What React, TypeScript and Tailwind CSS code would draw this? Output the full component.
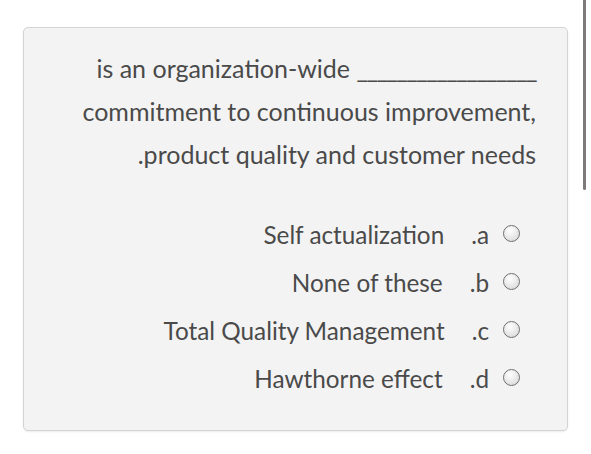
import React from "react";

const options = [
  { text: "Self actualization", letter: ".a" },
  { text: "None of these", letter: ".b" },
  { text: "Total Quality Management", letter: ".c" },
  { text: "Hawthorne effect", letter: ".d" },
];

function Radio() {
  return (
    <span className="inline-block w-[17px] h-[17px] rounded-full border border-[#6f6f6f] bg-[radial-gradient(circle_at_40%_30%,#ffffff,#d4d4d4)]" />
  );
}

export default function App() {
  return (
    <div
      className="relative w-[591px] h-[454px] bg-white overflow-hidden"
      style={{ fontFamily: "Lato, 'Open Sans', sans-serif" }}
    >
      <div className="absolute right-[5px] top-0 w-[3px] h-[190px] bg-[#7b7b7b] rounded-b-sm" />
      <div className="pt-[27px] pl-[23px] pr-[23px]">
        <div className="h-[404px] rounded-[5px] border border-[#d4d4d4] bg-[#f3f3f3] shadow-[0_1px_2px_rgba(0,0,0,0.08)] pr-[31px]">
          <div className="pt-[19px] text-right text-[25px] leading-[43px] text-[#4a4a4a]" dir="ltr">
            <div>
              is an organization-wide{" "}
              <span className="tracking-[-1.5px]">__________________</span>
            </div>
            <div>commitment to continuous improvement,</div>
            <div>.product quality and customer needs</div>
          </div>
          <div className="mt-[45px] flex flex-col gap-[20px] pr-[16px]">
            {options.map((o) => (
              <div key={o.letter} className="flex items-center justify-end h-[28px] text-[24.3px] text-[#4a4a4a]">
                <span>{o.text}</span>
                <span className="ml-[27px]">{o.letter}</span>
                <span className="ml-[14px] flex items-center -mt-[4px]"><Radio /></span>
              </div>
            ))}
          </div>
        </div>
      </div>
    </div>
  );
}
